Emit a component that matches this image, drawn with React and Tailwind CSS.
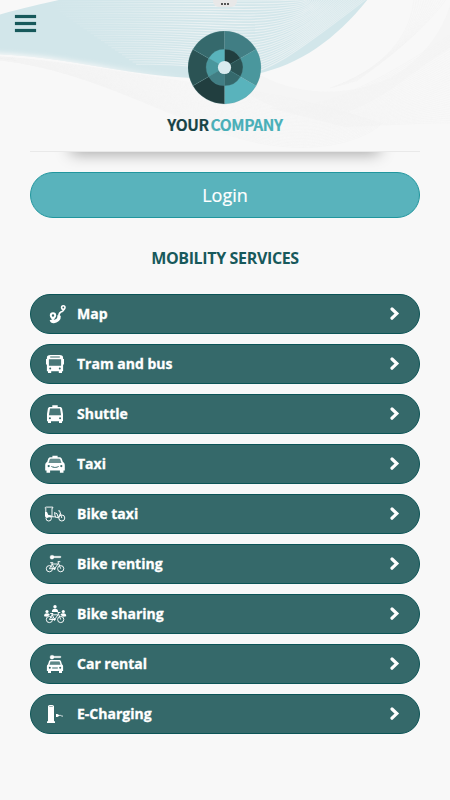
import React from "react";

const services = [
  { id: "map", label: "Map", icon: MapIcon },
  { id: "bus", label: "Tram and bus", icon: BusIcon },
  { id: "shuttle", label: "Shuttle", icon: ShuttleIcon },
  { id: "taxi", label: "Taxi", icon: TaxiIcon },
  { id: "bike-taxi", label: "Bike taxi", icon: BikeTaxiIcon },
  { id: "bike-renting", label: "Bike renting", icon: BikeRentingIcon },
  { id: "bike-sharing", label: "Bike sharing", icon: BikeSharingIcon },
  { id: "car-rental", label: "Car rental", icon: CarRentalIcon },
  { id: "charging", label: "E-Charging", icon: ChargingIcon },
];

function Icon({ children }) {
  return (
    <svg className="w-6 h-6 shrink-0" viewBox="0 0 24 24" fill="white" stroke="none">
      {children}
    </svg>
  );
}

function MapIcon() {
  return (
    <Icon>
      <path fillRule="evenodd" d="M10 10.3a3.200 3.200 0 0 1 3.200 3.200c0 1.700-1.700 3.300-3.200 5.300-1.500-2-3.200-3.600-3.200-5.300a3.200 3.200 0 0 1 3.200-3.200Zm0 2a1.200 1.200 0 1 0 0 2.400 1.200 1.200 0 0 0 0-2.400Z" />
      <path fillRule="evenodd" d="M20.3 3a2.500 2.500 0 0 1 2.500 2.500c0 1.300-1.200 2.600-2.500 4.200-1.300-1.600-2.500-2.900-2.500-4.200A2.500 2.500 0 0 1 20.300 3Zm0 1.600a.9.9 0 1 0 0 1.800.9.9 0 0 0 0-1.800Z" />
      <path d="M8.300 17.800c.7 2.600 4.100 2 6.500 0 2-1.800 1.100-3.200 1.200-4.300" fill="none" stroke="white" strokeWidth="3.400" />
      <path d="M16 14c-.3-2.300.8-3.900 3.900-4.700" fill="none" stroke="white" strokeWidth="1.700" />
    </Icon>
  );
}

function BusIcon() {
  return (
    <Icon>
      <path fillRule="evenodd" d="M7.500 3h9c2.600 0 3.600.9 3.600 2.700V7h.9v5.500h-.9v6.700H19V21h-3.200v-1.800H8.200V21H5v-1.800H3.900v-6.700H3V7h.9V5.700C3.900 3.900 4.900 3 7.500 3Zm-.3 1.500v1h9.600v-1H7.200Zm-1.300 2.700v6.600h12.200V7.200H5.900Zm1.300 8.400a1 1 0 1 0 0 2 1 1 0 0 0 0-2Zm9.600 0a1 1 0 1 0 0 2 1 1 0 0 0 0-2Z" />
      <path d="M5.900 7.200h12.200v6.600H5.900Z" opacity="0.100" />
    </Icon>
  );
}

function ShuttleIcon() {
  return (
    <Icon>
      <path fillRule="evenodd" d="M9.300 3.300h5.400v1.600H17c1.200 0 1.800.5 2.100 1.600l.9 5.500v7.300h-1V21h-3v-1.700H8V21H5v-1.700H4V12l.9-5.500C5.200 5.400 5.800 4.900 7 4.900h2.300V3.300ZM7 6.500 5.900 13.200h12.200L17 6.500H7ZM6.900 15.300a1 1 0 1 0 0 2 1 1 0 0 0 0-2Zm10.200 0a1 1 0 1 0 0 2 1 1 0 0 0 0-2Z" />
      <path d="M7 6.500h10l1.100 6.700H5.900Z" opacity="0.100" />
    </Icon>
  );
}

function TaxiIcon() {
  return (
    <Icon>
      <path fillRule="evenodd" d="M9.400 3.800h5.200v1.500h1.600c1.500 0 2.300.6 2.700 1.800l1 3c1.300.5 1.900 1.700 1.900 3.400v5h-1.300v2.200h-3.600v-2.200H7.100v2.200H3.500v-2.200H2.200v-5c0-1.700.6-2.900 1.900-3.400l1-3c.4-1.200 1.200-1.800 2.700-1.800h1.600V3.800ZM7.800 6.800c-.6 0-.9.2-1.100.8L5.600 11h12.800l-1.100-3.400c-.2-.6-.5-.8-1.100-.8H7.800ZM5.700 13a1.100 1.100 0 1 0 0 2.200 1.100 1.100 0 0 0 0-2.200Zm12.600 0a1.100 1.100 0 1 0 0 2.200 1.100 1.100 0 0 0 0-2.200ZM8 14.200c1 1.300 2 1.500 4 1.500s3-.2 4-1.500l-.8-.2c-.8.800-1.500.9-3.200.9s-2.400-.1-3.200-.9L8 14.200Z" />
      <path d="M6.700 6.800h10.600l1.100 4.200H5.600Z" opacity="0.250" />
    </Icon>
  );
}

function BikeTaxiIcon() {
  return (
    <Icon>
      <g fill="none" stroke="white" strokeWidth="0.950">
        <circle cx="5.700" cy="16.300" r="2.700" />
        <circle cx="18.800" cy="16" r="3" />
        <path d="M2 6.200c0-.7.500-1.100 1.200-1.100h6.600v1H9V15M2.800 6v5M8.500 14.800h3.300l3.400 1 2.200-4.500M11.500 11.300l1 4M11 10.600l3 1 1.300 4M15.300 8.800h1.300l2.200 7.200" />
      </g>
      <path d="M2 10h2l1.400 3 3.300.5v1.700H6.500c-1 0-1.600.4-2.400.8L2 14.500Z" />
    </Icon>
  );
}

// shared by the renting and sharing icons
function BikeFrame() {
  return (
    <g fill="none" stroke="white" strokeWidth="0.950">
      <circle cx="6.400" cy="16.700" r="3.100" />
      <circle cx="17.700" cy="16.700" r="3.100" />
      <path d="m6.400 16.700 2.700-4.700h6l-3.600 4.700H6.400Zm5.100 0L8.600 10.800M7.200 10.700h3M17.700 16.700l-2.800-7h2.400" />
      <circle cx="11.500" cy="16.700" r="0.800" fill="white" />
    </g>
  );
}

function KeyShape() {
  return (
    <path d="M9 3.200c1 0 1.700.4 2.100 1h6.500l.6.800-.8.800h-6.300c-.4.800-1.100 1.400-2.100 1.400a2 2 0 0 1 0-4Z" stroke="white" strokeWidth="0.300" />
  );
}

function BikeRentingIcon() {
  return (
    <Icon>
      <KeyShape />
      <BikeFrame />
    </Icon>
  );
}

function BikeSharingIcon() {
  return (
    <Icon>
      <circle cx="12" cy="4.700" r="1.700" />
      <path d="M8.900 9.900c0-2.200 1-3.200 3.100-3.200s3.100 1 3.100 3.200H8.900Z" />
      <circle cx="4" cy="9.500" r="1.600" />
      <path d="M1.100 14.200c0-2 .9-2.900 2.900-2.900s2.700.7 2.700 1.800l-2.900 1.600-2.700-.5Z" />
      <circle cx="20.300" cy="9.500" r="1.600" />
      <path d="M23.200 14.200c0-2-.9-2.900-2.900-2.900s-2.700.7-2.700 1.800l2.900 1.600 2.700-.5Z" />
      <g transform="translate(0 .8)">
        <BikeFrame />
      </g>
    </Icon>
  );
}

function CarRentalIcon() {
  return (
    <Icon>
      <KeyShape />
      <path fillRule="evenodd" d="M8 8h8c1.200 0 1.800.5 2.100 1.500l.9 2.900c.8.300 1.100 1.200 1.100 2.200v4.500H19V21h-3v-1.900H8V21H5v-1.900H3.900v-4.500c0-1 .3-1.900 1.100-2.200l.9-2.900C6.200 8.500 6.800 8 8 8Zm-.5 1.400-1 3.300h11l-1-3.300h-9ZM6.800 14.800a1 1 0 1 0 0 2 1 1 0 0 0 0-2Zm10.400 0a1 1 0 1 0 0 2 1 1 0 0 0 0-2ZM9.200 15.500v1h5.600v-1H9.200Z" />
      <path d="M7.500 9.400h9l1 3.300h-11Z" opacity="0.200" />
    </Icon>
  );
}

function ChargingIcon() {
  return (
    <Icon>
      <path fillRule="evenodd" d="M5 4.300C5 3.300 6.500 3 8 3s3 .3 3 1.300v14.900h1V21H4v-1.800h1V4.300Zm1.200.1v.5h3.600v-.5H6.200Z" />
      <path d="M13 11.900h1.300l2.700 1.500-2.700 1.600H13Z" />
      <path d="M16.500 13.300c1.200-.4 1.800 1.200 3.500.8" fill="none" stroke="white" strokeWidth="0.800" />
    </Icon>
  );
}

function HeaderWaves() {
  const lens = "M-9 17C22 8 42 4 63 -1H368C336 39 300 65 256 74C218 83 165 77 120 70C75 63 35 55 -9 54Z";
  const lines = Array.from({ length: 38 }, (_, i) => i);

  return (
    <svg className="absolute left-0 top-0 w-full h-[151px]" viewBox="0 0 450 151" fill="none">
      <defs>
        <linearGradient id="fade" gradientUnits="userSpaceOnUse" x1="50" y1="0" x2="370" y2="0">
          <stop offset="0" stopColor="#f8f8f8" stopOpacity="0" />
          <stop offset="0.250" stopColor="#f8f8f8" stopOpacity="0.300" />
          <stop offset="0.500" stopColor="#f8f8f8" stopOpacity="0.700" />
          <stop offset="1" stopColor="#f8f8f8" stopOpacity="0.400" />
        </linearGradient>
        <linearGradient id="edge" gradientUnits="userSpaceOnUse" x1="0" y1="0" x2="190" y2="0">
          <stop offset="0" stopColor="#f8f8f8" />
          <stop offset="0.500" stopColor="#f8f8f8" stopOpacity="0.800" />
          <stop offset="1" stopColor="#f8f8f8" stopOpacity="0" />
        </linearGradient>
        <filter id="soft" x="-10%" y="-50%" width="120%" height="200%">
          <feGaussianBlur stdDeviation="2.500" />
        </filter>
        <clipPath id="lens-clip">
          <path d={lens} />
        </clipPath>
      </defs>
      <path
        d="M262 76C300 96 350 97 390 78C425 60 445 25 450 5V48C410 72 380 105 330 118C290 118 250 100 230 78Z"
        fill="#f4f4f4"
        opacity="0.900"
      />
      <g strokeWidth="0.600" stroke="#f4f4f4">
        {lines.map((i) => (
          <path
            key={i}
            d={`M0 ${57 + i * 0.080}C${60 + i} ${60 + i * 0.300} ${140 + i} ${76 + i * 1.300} ${215 + i} ${86 + i * 1.500}S${300 + i * 2} ${100 + i * 0.900} ${345 + i} ${112 + i * 0.300}`}
          />
        ))}
        {lines.map((i) => (
          <path
            key={i}
            d={`M${270 + i * 2} ${108 + i * 0.500}C${320 + i} ${112 + i * 0.400} ${380 + i} ${82 + i * 1.100} 451 ${34 + i * 2.400}`}
          />
        ))}
        {lines.slice(0, 14).map((i) => (
          <path
            key={i}
            d={`M${330 + i * 2} ${88 - i * 0.500}C${370 + i} ${75 - i} ${410 + i} ${45 - i} ${414 + i * 2.500} -1`}
          />
        ))}
      </g>
      <path d={lens} fill="#d2e6ea" />
      <g clipPath="url(#lens-clip)">
        {lines.slice(0, 27).map((i) => (
          <path
            key={i}
            d={`M${45 + i * 3.500} ${2 + i * 2.400}C${110 + i * 3} ${i * 2.400 + 1} ${180 + i} ${i * 2.600 + 1} 235 ${i * 2.800 + 1}S${315 - i * 0.300} ${i * 1.700} ${300 + i * 2.600} -2`}
            stroke="url(#fade)"
            strokeWidth="1.100"
          />
        ))}
        <path
          d="M-20 57C35 57 75 66 120 73C145 77 165 79 190 82"
          stroke="url(#edge)"
          strokeWidth="9"
          filter="url(#soft)"
        />
      </g>
    </svg>
  );
}

function sector(index, radius) {
  const a = ((index * 60 - 90) * Math.PI) / 180;
  const b = a + Math.PI / 3;
  return `M0 0L${radius * Math.cos(a)} ${radius * Math.sin(a)}A${radius} ${radius} 0 0 1 ${radius * Math.cos(b)} ${radius * Math.sin(b)}Z`;
}

function Logo() {
  const outer = ["#417e84", "#4a979d", "#59b3bc", "#213e3f", "#2b5354", "#35696c"];
  const inner = ["#213e3f", "#2b5354", "#35696c", "#417e84", "#4a979d", "#59b3bc"];

  return (
    <div className="relative flex flex-col items-center pt-[31px]">
      <svg className="w-[74px] h-[74px]" viewBox="-36.5 -36.5 74 74">
        {outer.map((color, i) => (
          <path key={i} d={sector(i, 36.5)} fill={color} stroke="#5d9297" strokeWidth="0.200" />
        ))}
        {inner.map((color, i) => (
          <path key={i} d={sector(i, 18.3)} fill={color} stroke="#5d9297" strokeWidth="0.200" />
        ))}
        <circle r="6.600" fill="#d9ebef" />
      </svg>
      <div className="mt-[7px] flex gap-[2px] text-[15.5px] leading-6 font-bold tracking-[-0.38px] font-['Noto_Sans_CJK_JP',sans-serif] [-webkit-text-stroke:0.2px]">
        <span className="text-[#184346]">YOUR</span>
        <span className="text-[#49afb8]">COMPANY</span>
      </div>
    </div>
  );
}

export default function App() {
  return (
    <div className="relative w-full h-[800px] overflow-hidden bg-[#f8f8f8] font-['Open_Sans',sans-serif]">
      <header className="relative h-[151px]">
        <HeaderWaves />
        <Logo />
        <button className="absolute left-[15px] top-[15px] flex flex-col gap-[4px]" aria-label="Menu">
          <span className="block w-[21px] h-[3px] bg-[#17595b] shadow-[0_0_1px_#17595b]" />
          <span className="block w-[21px] h-[3px] bg-[#17595b] shadow-[0_0_1px_#17595b]" />
          <span className="block w-[21px] h-[3px] bg-[#17595b] shadow-[0_0_1px_#17595b]" />
        </button>
        <div className="absolute left-[213px] top-0 flex h-[7px] w-6 items-center justify-center gap-[1px] rounded-b-[6px] bg-[#e8e8e8]">
          <span className="w-[2px] h-[2px] bg-[#555]" />
          <span className="w-[2px] h-[2px] bg-[#555]" />
          <span className="w-[2px] h-[2px] bg-[#555]" />
        </div>
      </header>

      <div className="mx-[30px] h-[21px] overflow-hidden border-t border-[#e9e9e9]">
        <div className="mx-[29px] -mt-10 h-10 shadow-[0_13px_16px_-12px_rgba(0,0,0,0.38)]" />
      </div>

      <main className="px-[30px]">
        <button className="flex h-[46px] w-full items-center justify-center rounded-full border border-[#21969e] bg-[#59b3bc] text-[18px] text-white [-webkit-text-stroke:0.2px]">
          Login
        </button>
        <h2 className="mt-[28px] text-center text-[16px] leading-6 font-bold tracking-[-0.35px] text-[#17595b]">
          MOBILITY SERVICES
        </h2>

        <div className="mt-6 flex flex-col gap-[10px]">
          {services.map(({ id, label, icon: ServiceIcon }) => (
            <button
              key={id}
              className="flex h-10 w-full items-center rounded-full border border-[#0c5456] bg-[#35696a] pl-3 pr-[19px] text-white"
            >
              <ServiceIcon />
              <span className="ml-[10px] text-[14px] leading-5 font-bold [-webkit-text-stroke:0.3px]">{label}</span>
              <svg className="ml-auto w-[10px] h-[14px]" viewBox="0 0 10 14" fill="none">
                <path d="M2 2l4.800 4.600L2 11.200" stroke="white" strokeWidth="3.200" strokeLinecap="round" />
              </svg>
            </button>
          ))}
        </div>
      </main>
    </div>
  );
}
